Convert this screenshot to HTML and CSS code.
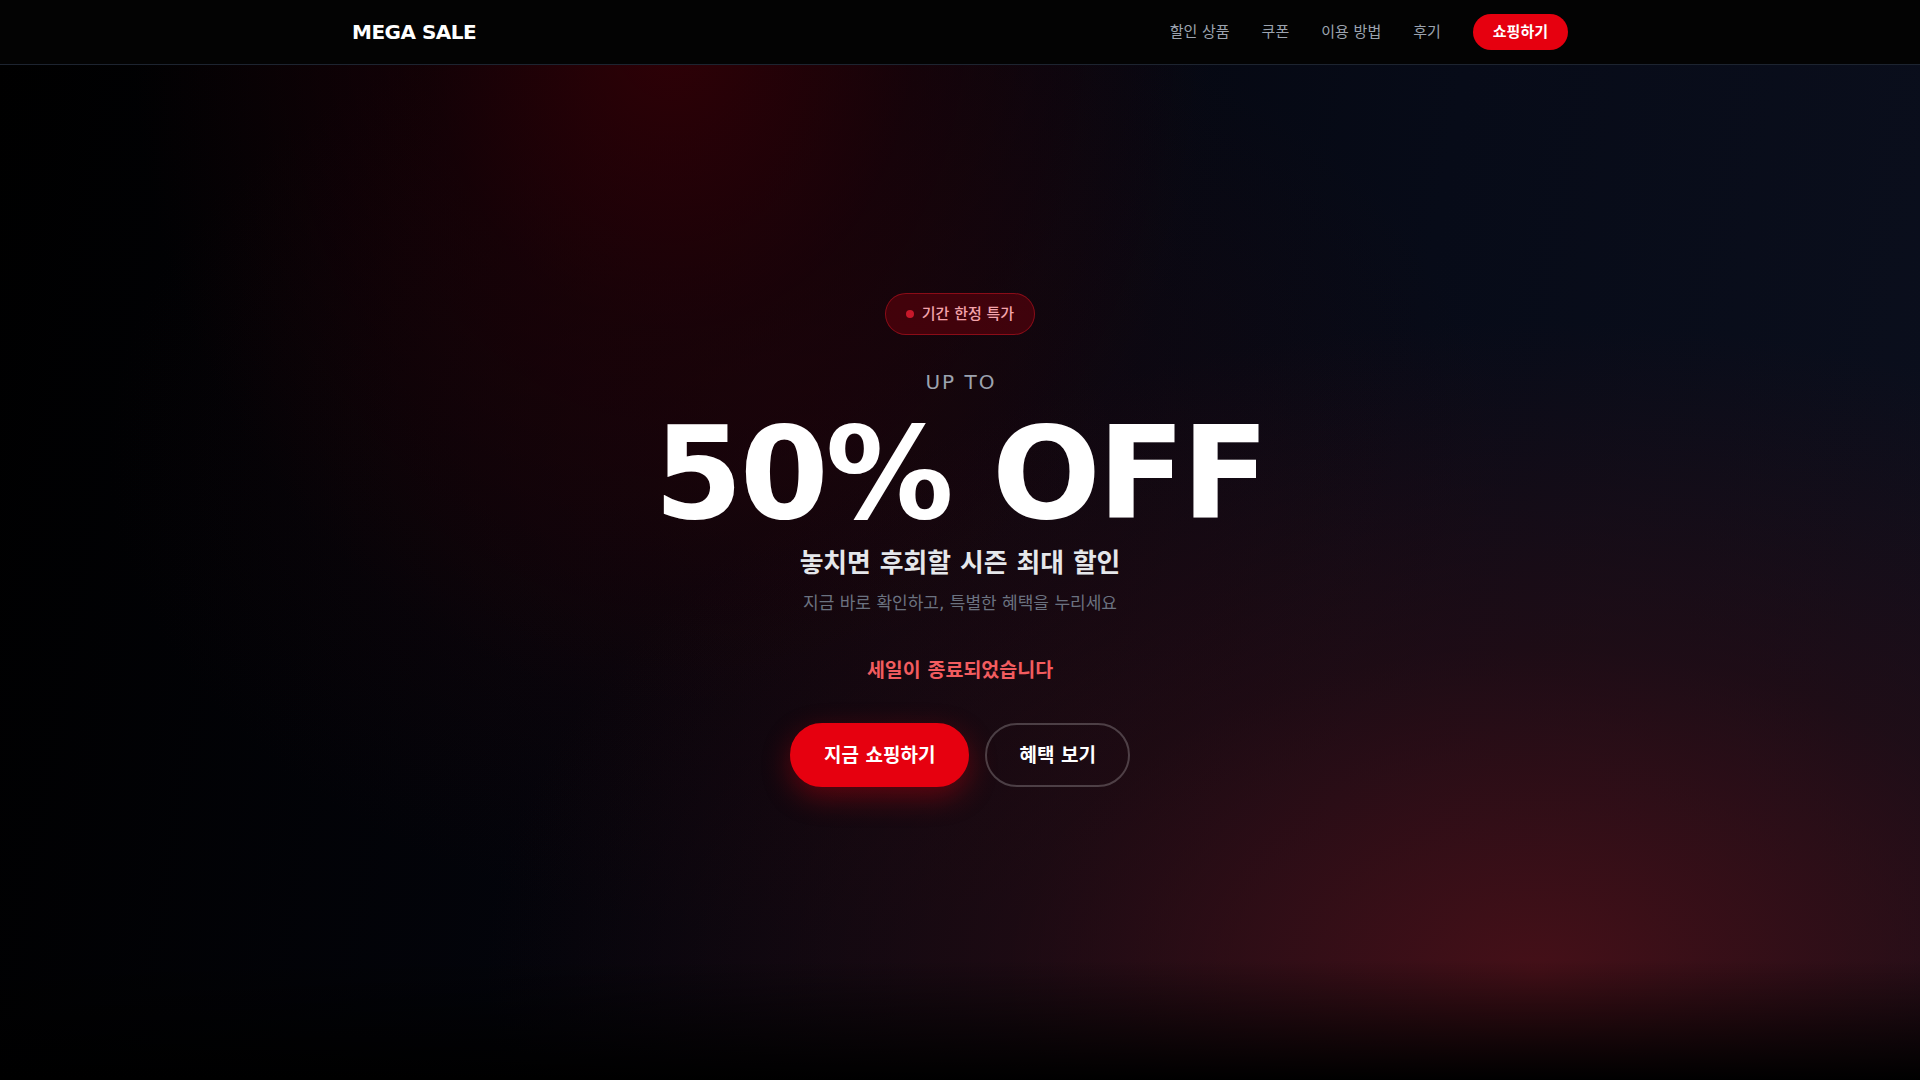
FILE: index.html
```html
<!DOCTYPE html>
<html lang="ko">
<head>
<meta charset="utf-8">
<title>MEGA SALE</title>
<link rel="stylesheet" href="styles.css">
</head>
<body>
<header class="site-header">
  <div class="container header-inner">
    <div class="logo">MEGA SALE</div>
    <nav class="nav">
      <a class="nav-link" href="#">할인 상품</a>
      <a class="nav-link" href="#">쿠폰</a>
      <a class="nav-link" href="#">이용 방법</a>
      <a class="nav-link" href="#">후기</a>
      <a class="nav-cta" href="#">쇼핑하기</a>
    </nav>
  </div>
</header>
<main class="hero">
  <div class="hero-content">
    <div class="badge"><span class="badge-dot"></span><span>기간 한정 특가</span></div>
    <p class="upto">UP TO</p>
    <h1 class="headline">50% OFF</h1>
    <p class="subtitle">놓치면 후회할 시즌 최대 할인</p>
    <p class="desc">지금 바로 확인하고, 특별한 혜택을 누리세요</p>
    <p class="status">세일이 종료되었습니다</p>
    <div class="actions">
      <a class="btn btn-primary" href="#">지금 쇼핑하기</a>
      <a class="btn btn-outline" href="#">혜택 보기</a>
    </div>
  </div>
  <div class="hero-fade"></div>
</main>
</body>
</html>
```
FILE: styles.css
```css
* { box-sizing: border-box; margin: 0; padding: 0; }
html, body { height: 100%; }
body {
  font-family: "DejaVu Sans", "Noto Sans CJK KR", sans-serif;
  background: #000;
  color: #fff;
  overflow: hidden;
}
a { text-decoration: none; color: inherit; }

.site-header {
  position: fixed;
  top: 0; left: 0; right: 0;
  z-index: 10;
  background: #030303;
  border-bottom: 1px solid #1d2430;
}
.container {
  max-width: 1280px;
  margin: 0 auto;
  padding: 0 32px;
}
.header-inner {
  height: 64px;
  display: flex;
  align-items: center;
  justify-content: space-between;
}
.logo {
  font-size: 20px;
  font-weight: 700;
  letter-spacing: -0.5px;
  line-height: 28px;
  color: #fff;
}
.nav {
  display: flex;
  align-items: center;
  gap: 32px;
}
.nav-link {
  font-size: 15px;
  line-height: 20px;
  color: #9ca3af;
}
.nav-cta {
  font-size: 15px;
  line-height: 20px;
  font-weight: 700;
  color: #fff;
  background: #e6000f;
  padding: 8px 20px;
  border-radius: 999px;
}

.hero {
  position: relative;
  height: 100vh;
  display: flex;
  align-items: center;
  justify-content: center;
  background:
    radial-gradient(ellipse 540px 680px at 35% 2%, rgba(50, 0, 6, 0.95), rgba(36, 0, 5, 0.5) 45%, rgba(0, 0, 0, 0) 100%),
    radial-gradient(ellipse 1050px 650px at 80% 90%, rgba(72, 16, 24, 0.95), rgba(50, 12, 18, 0.5) 50%, rgba(0, 0, 0, 0) 100%),
    radial-gradient(ellipse 700px 480px at 42% 42%, rgba(30, 6, 12, 0.6), rgba(0, 0, 0, 0) 100%),
    linear-gradient(100deg, #000 0%, #03040b 35%, #070b18 70%, #0b0f1d 100%);
}
.hero-fade {
  position: absolute;
  left: 0; right: 0; bottom: 0;
  height: 120px;
  background: linear-gradient(to bottom, rgba(0, 0, 0, 0), #000);
  pointer-events: none;
}
.hero-content {
  position: relative;
  z-index: 1;
  display: flex;
  flex-direction: column;
  align-items: center;
  text-align: center;
}
.badge {
  display: inline-flex;
  align-items: center;
  gap: 8px;
  padding: 10px 20px;
  border: 1px solid rgba(200, 20, 35, 0.55);
  background: rgba(120, 0, 10, 0.45);
  border-radius: 999px;
  font-size: 15px;
  line-height: 20px;
  font-weight: 500;
  color: #f4a3ab;
}
.badge-dot {
  width: 8px;
  height: 8px;
  border-radius: 50%;
  background: #c8182a;
}
.upto {
  margin-top: 33px;
  font-size: 20px;
  line-height: 28px;
  letter-spacing: 0.1em;
  color: #9ca3af;
  padding-left: 0.1em;
}
.headline {
  margin-top: 14px;
  font-size: 128px;
  line-height: 1;
  font-weight: 700;
  letter-spacing: -0.025em;
  color: #fff;
}
.subtitle {
  margin-top: 9px;
  font-size: 25.8px;
  line-height: 32px;
  font-weight: 700;
  color: #e5e7eb;
}
.desc {
  margin-top: 12px;
  font-size: 17px;
  line-height: 24px;
  color: #6b7280;
}
.status {
  margin-top: 42px;
  font-size: 19.5px;
  line-height: 28px;
  font-weight: 700;
  color: #f25c5f;
}
.actions {
  margin-top: 38px;
  display: flex;
  gap: 16px;
}
.btn {
  display: inline-block;
  padding: 16px 32px;
  border-radius: 999px;
  font-size: 19px;
  line-height: 28px;
  font-weight: 700;
  color: #fff;
  border: 2px solid transparent;
}
.btn-primary {
  background: #e6000f;
  border-color: #e6000f;
  box-shadow: 0 10px 28px rgba(230, 0, 15, 0.35);
}
.btn-outline {
  border-color: rgba(255, 255, 255, 0.22);
  background: transparent;
}
```
